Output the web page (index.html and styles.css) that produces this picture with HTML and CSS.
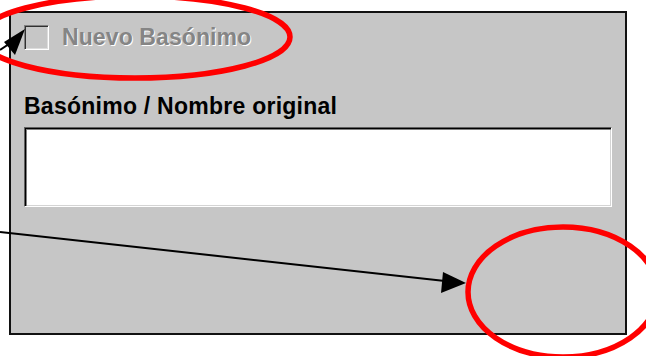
FILE: index.html
```html
<!DOCTYPE html>
<html lang="es">
<head>
    <meta charset="UTF-8">
    <meta name="viewport" content="width=device-width, initial-scale=1.0">
    <title>Basónimo</title>
    <link rel="stylesheet" href="styles.css">
</head>
<body>
    <div class="panel">
        <label class="check-row">
            <span class="check-box"></span>
            <span class="check-text">Nuevo Basónimo</span>
        </label>

        <p class="field-label">Basónimo / Nombre original</p>
        <div class="text-field"></div>
    </div>

    <!-- anotaciones -->
    <svg class="notes" width="646" height="356" viewBox="0 0 646 356">
        <ellipse cx="135" cy="37" rx="155" ry="41" fill="none" stroke="#ff0000" stroke-width="5.5"/>
        <ellipse cx="563" cy="292" rx="95" ry="65" fill="none" stroke="#ff0000" stroke-width="5.5"/>
        <line x1="0" y1="50" x2="12" y2="42" stroke="#000" stroke-width="2"/>
        <polygon points="25,29 4,42 15,55" fill="#000"/>
        <line x1="0" y1="232" x2="445" y2="281" stroke="#000" stroke-width="2"/>
        <polygon points="466,283 443,272 441,293" fill="#000"/>
    </svg>
</body>
</html>
```

FILE: styles.css
```css
* {
    margin: 0;
    padding: 0;
    box-sizing: border-box;
}

body {
    font-family: "Liberation Sans", Arial, sans-serif;
    background-color: #ffffff;
    position: relative;
    width: 646px;
    height: 356px;
    overflow: hidden;
}
.panel {
    margin: 11px 0 0 9px;
    width: 618px;
    height: 324px;
    padding: 12px 13px 0 13px;
    background-color: #c6c6c6;
    border: 2px solid #111111;
}
.check-row {
    display: flex;
    align-items: center;
    gap: 13px;
    height: 25px;
}
.check-box {
    width: 25px;
    height: 25px;
    border: 1px solid;
    border-color: #808080 #ffffff #ffffff #808080;
    box-shadow: inset 1px 1px #303030, inset -1px -1px #dcdcdc;
}
.check-text {
    font-size: 23px;
    font-weight: bold;
    line-height: 25px;
    letter-spacing: 0.1px;
    color: #858585;
    text-shadow: 1px 1px #ffffff;
}
.field-label {
    margin-top: 44px;
    font-size: 23px;
    font-weight: bold;
    line-height: 25px;
    letter-spacing: 0.25px;
    color: #000000;
}
.text-field {
    margin-top: 8px;
    width: 588px;
    height: 80px;
    background-color: #ffffff;
    border: 1px solid;
    border-color: #606060 #ffffff #ffffff #606060;
    box-shadow: inset 1px 1px #000000, inset 2px 2px #808080, inset -1px -1px #d4d4d4;
}
.notes {
    position: absolute;
    top: 0;
    left: 0;
    pointer-events: none;
}
```
